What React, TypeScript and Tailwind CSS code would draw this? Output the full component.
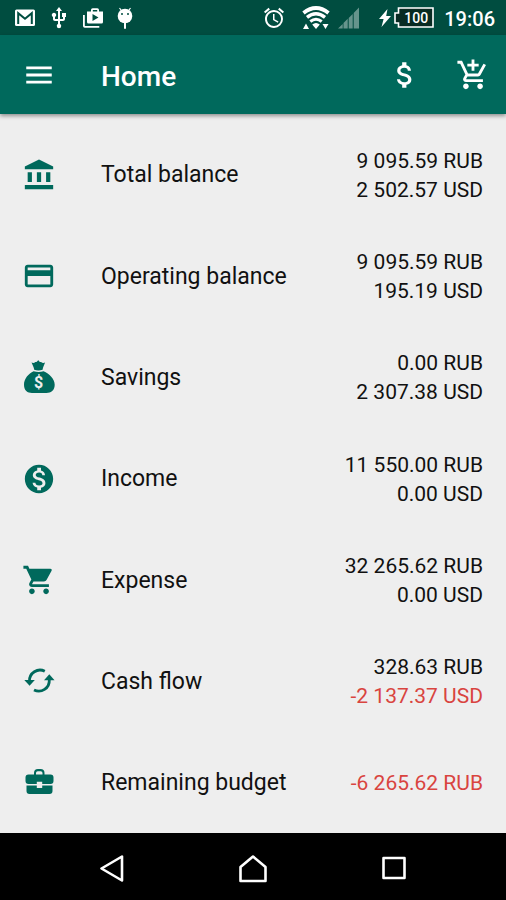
import type { ReactNode } from "react";
import {
  MdAccountBalance,
  MdAddShoppingCart,
  MdAlarm,
  MdAttachMoney,
  MdCreditCard,
  MdMenu,
  MdMonetizationOn,
  MdShoppingCart,
  MdUsb,
} from "react-icons/md";

interface Amount {
  value: string;
  negative?: boolean;
}

interface Row {
  label: string;
  icon: ReactNode;
  amounts: Amount[];
}

function MoneyBagIcon() {
  return (
    <svg viewBox="0 0 34 34" className="size-[34px]" fill="currentColor" aria-hidden="true">
      <path d="M9.500 2.500c1.700.8 2.900.4 3.900-.6.900.4 1.700-.2 2.800-1.900 1.100 1.700 1.900 2.300 2.900 1.900 1 1 2.300 1.400 4 .6-.9 2.500-2.100 4.300-2.500 7.300q-4.200 1.200-8.400 0c-.4-3-1.700-4.800-2.700-7.300z" />
      <path d="M11.600 11.300q5 1.400 10 0c5.600 2.400 11.100 7.700 11.100 13.500 0 6-4 8.200-8.200 8.200H10c-4.500 0-8-2.400-8-8.200 0-6 4.600-11.200 9.600-13.500z" />
      <text x="16.500" y="27.500" textAnchor="middle" fontSize="16" fontWeight="700" fill="#eeeeee">
        $
      </text>
    </svg>
  );
}

function CashFlowIcon() {
  return (
    <svg viewBox="0 0 34 34" className="size-[34px]" fill="none" aria-hidden="true">
      <path d="M22.800 7.300A10.500 10.500 0 0 0 7.500 17" stroke="currentColor" strokeWidth="2.800" />
      <path d="M12 25.900A10.500 10.500 0 0 0 27.300 16" stroke="currentColor" strokeWidth="2.800" />
      <path d="M2.300 16h10.500l-5.200 5.700z" fill="currentColor" />
      <path d="M22 16.200h10.500l-5.200-5.900z" fill="currentColor" />
    </svg>
  );
}

function BriefcaseIcon() {
  return (
    <svg viewBox="0 0 34 34" className="size-[34px]" fill="currentColor" aria-hidden="true">
      <path
        fillRule="evenodd"
        d="M12 9.500V8q0-4 4-4h2.500q4 0 4 4v1.500h6q3 0 3 3V16q0 3-3 3h-8.300v-2.200h-5.400V19H6.500q-3 0-3-3v-3.500q0-3 3-3zM14 9.500h6.500V8q0-1.800-1.800-1.800h-2.900Q14 6.200 14 8z"
      />
      <path d="M4.500 20.500h10.300V23h5.400v-2.500h10.300V26q0 3-3 3h-20q-3 0-3-3z" />
    </svg>
  );
}

function GmailIcon() {
  return (
    <svg viewBox="0 0 20 20" className="size-5" aria-hidden="true">
      <rect y="1.500" width="20" height="16.500" rx="1.500" fill="#fff" />
      <path d="M3.200 16V5.200L10 10.700l6.800-5.500V16" fill="none" stroke="#004d40" strokeWidth="2" />
    </svg>
  );
}

function ShopIcon() {
  return (
    <svg viewBox="0 0 20 20" className="size-5" fill="#fff" aria-hidden="true">
      <path
        fillRule="evenodd"
        d="M4 3.500h4V2q0-1.700 1.700-1.700h4.600Q16 .3 16 2v1.500h4V14q0 1.500-1.500 1.500h-13Q4 15.500 4 14zM9.800 3.500h4.400V2H9.800zM9.500 6v7l6-3.500z"
      />
      <path d="M0 7h1.800v10.500q0 .5.500.5h14v1.800H1.800Q0 19.800 0 18z" />
    </svg>
  );
}

function DroidIcon() {
  return (
    <svg viewBox="0 0 20 22" className="h-[22px] w-5" aria-hidden="true">
      <path d="M4.500 1l3 4M15.500 1l-3 4" stroke="#fff" strokeWidth="1.200" />
      <circle cx="10" cy="9" r="7.300" fill="#fff" />
      <circle cx="7" cy="7" r="1" fill="#004d40" />
      <circle cx="13" cy="7" r="1" fill="#004d40" />
      <path d="M10 15v6" stroke="#fff" strokeWidth="2" strokeLinecap="round" />
    </svg>
  );
}

function WifiIcon() {
  return (
    <svg viewBox="0 0 28 24" className="h-6 w-7" fill="none" stroke="#fff" aria-hidden="true">
      <path d="M1.500 7Q14-3 26.500 7" strokeWidth="3.800" />
      <path d="M5 11.400Q14 4.200 23 11.400" strokeWidth="3.400" />
      <path d="M8.300 15.500Q14 11 19.700 15.500" strokeWidth="3" />
      <path d="M10.200 18.500q3.800-3 7.600 0L14 23z" fill="#fff" stroke="none" />
      <path d="M1 23l3-5.500L7 23zM20.500 18h6l-3 5z" fill="#fff" stroke="none" />
    </svg>
  );
}

function SignalIcon() {
  return (
    <svg viewBox="0 0 21 22" className="h-[22px] w-[21px]" aria-hidden="true">
      <path
        d="M0 21.500l4.700-4.500v4.500zM5.500 21.500V16l4.200-4.200v9.700zM10.700 21.500V11l4-4v14.500zM15.700 21.500V6L21 .5v21z"
        fill="#fff"
        fillOpacity=".4"
      />
    </svg>
  );
}

function BoltIcon() {
  return (
    <svg viewBox="0 0 12 18" className="h-[18px] w-3" fill="#fff" aria-hidden="true">
      <path d="M8.500 0L0 10h4.600L2.500 18 12 7H7.200z" />
    </svg>
  );
}

function Battery() {
  return (
    <div className="relative flex h-[21px] w-10 items-center justify-center pl-1 text-sm font-medium">
      <svg viewBox="0 0 40 21" className="absolute inset-0 h-[21px] w-10" aria-hidden="true">
        <path
          d="M4.500 1h34.500v19H4.500v-4H1V6h3.500z"
          fill="#082b23"
          stroke="#fff"
          strokeWidth="1.600"
        />
      </svg>
      <span className="relative">100</span>
    </div>
  );
}

const rows: Row[] = [
  {
    label: "Total balance",
    icon: <MdAccountBalance size={34} />,
    amounts: [{ value: "9 095.59 RUB" }, { value: "2 502.57 USD" }],
  },
  {
    label: "Operating balance",
    icon: <MdCreditCard size={34} />,
    amounts: [{ value: "9 095.59 RUB" }, { value: "195.19 USD" }],
  },
  {
    label: "Savings",
    icon: <MoneyBagIcon />,
    amounts: [{ value: "0.00 RUB" }, { value: "2 307.38 USD" }],
  },
  {
    label: "Income",
    icon: <MdMonetizationOn size={34} />,
    amounts: [{ value: "11 550.00 RUB" }, { value: "0.00 USD" }],
  },
  {
    label: "Expense",
    icon: <MdShoppingCart size={34} />,
    amounts: [{ value: "32 265.62 RUB" }, { value: "0.00 USD" }],
  },
  {
    label: "Cash flow",
    icon: <CashFlowIcon />,
    amounts: [{ value: "328.63 RUB" }, { value: "-2 137.37 USD", negative: true }],
  },
  {
    label: "Remaining budget",
    icon: <BriefcaseIcon />,
    amounts: [{ value: "-6 265.62 RUB", negative: true }],
  },
];

function StatusBar() {
  return (
    <div className="flex h-[35px] items-center justify-between bg-[#004d40] pr-[11px] pl-[15px] text-white">
      <div className="flex items-center gap-3">
        <GmailIcon />
        <MdUsb size={24} />
        <ShopIcon />
        <DroidIcon />
      </div>
      <div className="flex items-center gap-5">
        <div className="flex items-center gap-2">
          <MdAlarm size={24} className="mr-2" />
          <WifiIcon />
          <SignalIcon />
        </div>
        <div className="flex items-center gap-[3px]">
          <BoltIcon />
          <Battery />
          <span className="ml-[7px] pt-0.5 text-xl font-medium">19:06</span>
        </div>
      </div>
    </div>
  );
}

export default function App() {
  return (
    <div className="flex min-h-screen flex-col bg-[#eeeeee] font-[Roboto,sans-serif] text-[#111111]">
      <StatusBar />

      <header className="flex h-[79px] items-center bg-[#00695c] pr-4 pl-[22px] text-white shadow-[0_2px_4px_rgba(0,0,0,0.4)]">
        <button type="button" aria-label="Open menu">
          <MdMenu size={34} />
        </button>
        <h1 className="ml-[45px] flex-1 pt-1 text-[28px] font-medium">Home</h1>
        <div className="flex gap-[34px]">
          <button type="button" aria-label="Currency">
            <MdAttachMoney size={34} />
          </button>
          <button type="button" aria-label="Add expense">
            <MdAddShoppingCart size={34} />
          </button>
        </div>
      </header>

      <main className="flex flex-1 flex-col pt-[10px]">
        <ul className="flex flex-1 flex-col">
          {rows.map((row) => (
            <li key={row.label} className="flex min-h-[101px] flex-1 items-center gap-[45px] pr-[23px] pl-[22px]">
              <span className="text-[#00695c]">{row.icon}</span>
              <div className="flex flex-1 items-center justify-between pt-0.5">
                <span className="text-[23px]">{row.label}</span>
                <div className="text-right text-[21px] leading-[29px]">
                  {row.amounts.map((amount) => (
                    <p key={amount.value} className={amount.negative ? "text-[#d9443f]" : undefined}>
                      {amount.value}
                    </p>
                  ))}
                </div>
              </div>
            </li>
          ))}
        </ul>
      </main>

      <nav className="grid h-[67px] grid-cols-3 bg-black px-[41px] pt-1 text-white">
        <button type="button" aria-label="Back" className="flex items-center justify-center">
          <svg viewBox="0 0 28 28" className="size-7" fill="none" stroke="currentColor" strokeWidth="2.600">
            <path d="M24 1.500v24L3.500 13.500z" strokeLinejoin="round" />
          </svg>
        </button>
        <button type="button" aria-label="Home screen" className="flex items-center justify-center">
          <svg viewBox="0 0 28 28" className="size-7" fill="none" stroke="currentColor" strokeWidth="2.600">
            <path d="M1.500 26V12L14 1.500 26.500 12v14z" strokeLinejoin="round" />
          </svg>
        </button>
        <button type="button" aria-label="Recent apps" className="flex items-center justify-center">
          <svg viewBox="0 0 28 28" className="size-7" fill="none" stroke="currentColor" strokeWidth="2.600">
            <rect x="3.500" y="3" width="21" height="20" strokeLinejoin="round" />
          </svg>
        </button>
      </nav>
    </div>
  );
}
